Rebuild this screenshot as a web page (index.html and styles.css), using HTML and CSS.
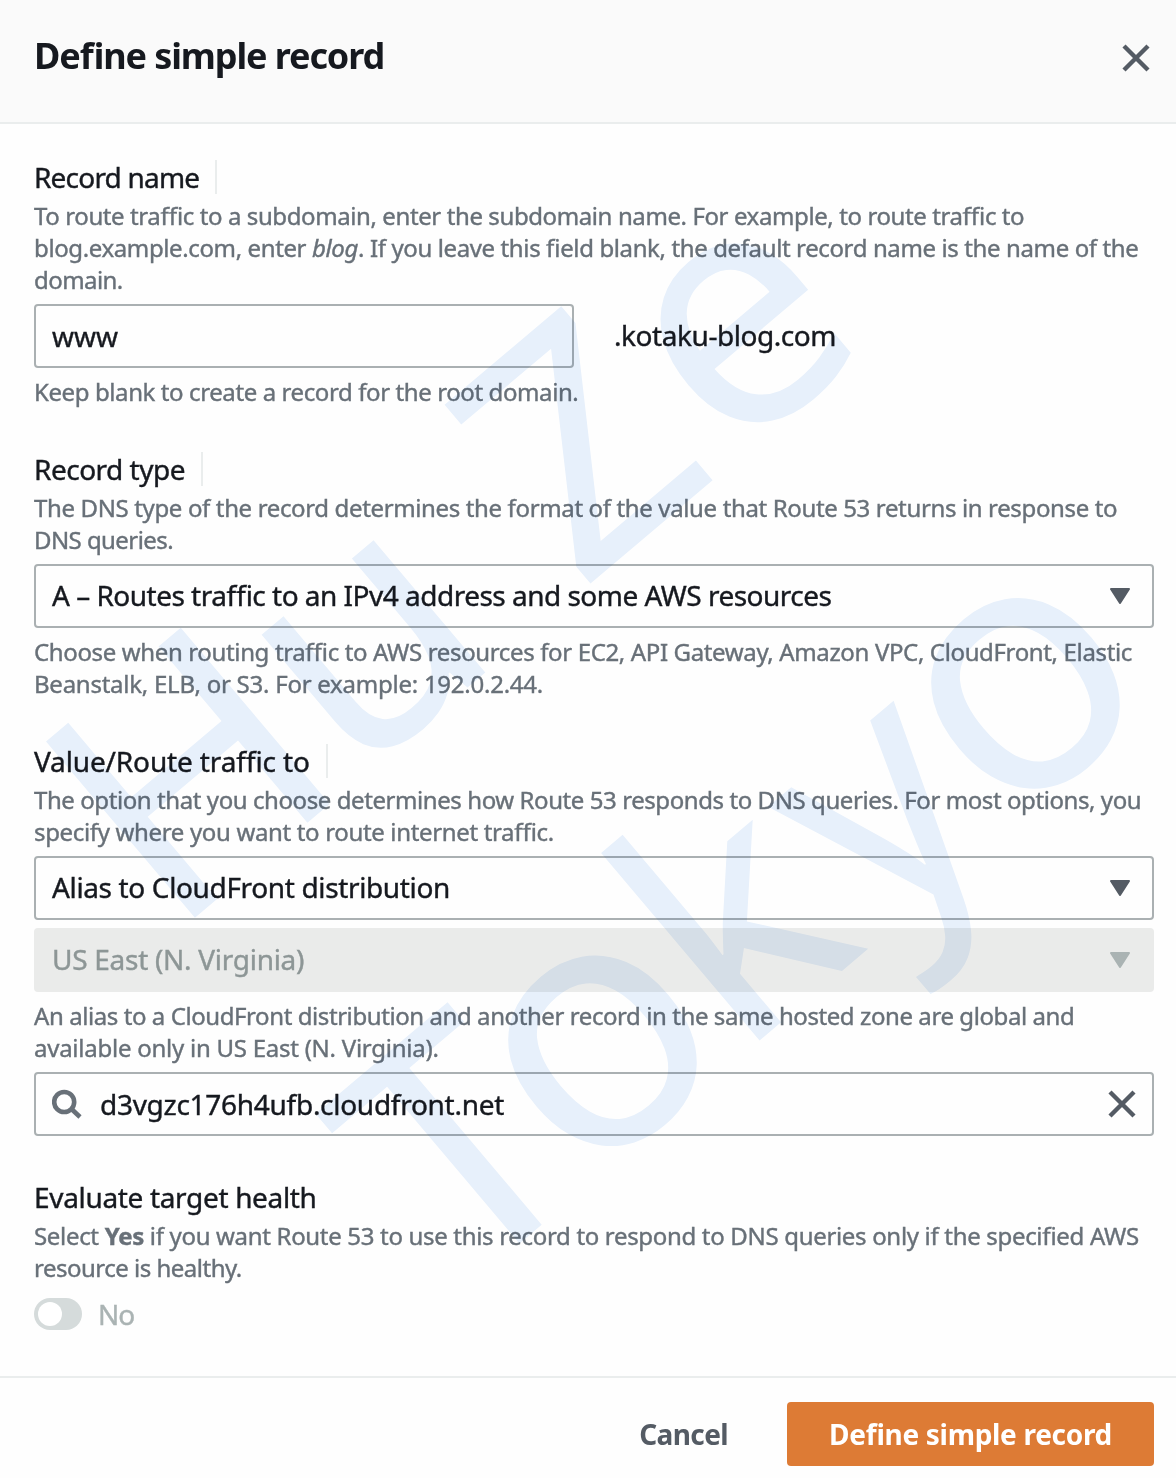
FILE: index.html
```html
<!DOCTYPE html>
<html lang="en">
<head>
<meta charset="utf-8">
<title>Define simple record</title>
<link rel="stylesheet" href="styles.css">
</head>
<body>
<div class="panel">
  <header class="panel-header">
    <h1 class="title">Define simple record</h1>
    <svg class="close" viewBox="0 0 28 28" width="28" height="28"><path d="M2 2 26 26M26 2 2 26"/></svg>
  </header>
  <main class="content">
    <section class="field">
      <h2 class="label label-info"><span class="l1">Record name</span></h2>
      <p class="help"><span class="line h1a">To route traffic to a subdomain, enter the subdomain name. For example, to route traffic to</span><span class="line h1b">blog.example.com, enter <em>blog</em>. If you leave this field blank, the default record name is the name of the</span><span class="line h1c">domain.</span></p>
      <div class="name-row">
        <div class="box name-input"><span class="v1">www</span></div>
        <span class="suffix">.kotaku-blog.com</span>
      </div>
      <p class="help after"><span class="line h2a">Keep blank to create a record for the root domain.</span></p>
    </section>
    <section class="field">
      <h2 class="label label-info"><span class="l2">Record type</span></h2>
      <p class="help"><span class="line h3a">The DNS type of the record determines the format of the value that Route 53 returns in response to</span><span class="line h3b">DNS queries.</span></p>
      <div class="box"><span class="v2">A – Routes traffic to an IPv4 address and some AWS resources</span><svg class="caret" viewBox="0 0 20 16" width="20" height="16"><path d="M1 1H19L10 15Z"/></svg></div>
      <p class="help after"><span class="line h4a">Choose when routing traffic to AWS resources for EC2, API Gateway, Amazon VPC, CloudFront, Elastic</span><span class="line h4b">Beanstalk, ELB, or S3. For example: 192.0.2.44.</span></p>
    </section>
    <section class="field">
      <h2 class="label label-info"><span class="l3">Value/Route traffic to</span></h2>
      <p class="help"><span class="line h5a">The option that you choose determines how Route 53 responds to DNS queries. For most options, you</span><span class="line h5b">specify where you want to route internet traffic.</span></p>
      <div class="box"><span class="v3">Alias to CloudFront distribution</span><svg class="caret" viewBox="0 0 20 16" width="20" height="16"><path d="M1 1H19L10 15Z"/></svg></div>
      <div class="box disabled"><span class="v4">US East (N. Virginia)</span><svg class="caret" viewBox="0 0 20 16" width="20" height="16"><path d="M1 1H19L10 15Z"/></svg></div>
      <p class="help after"><span class="line h6a">An alias to a CloudFront distribution and another record in the same hosted zone are global and</span><span class="line h6b">available only in US East (N. Virginia).</span></p>
      <div class="box search">
        <svg class="glass" viewBox="0 0 32 32" width="32" height="32"><circle cx="12.2" cy="14" r="10"/><path d="M19.5 21 28 29"/></svg>
        <span class="v5">d3vgzc176h4ufb.cloudfront.net</span>
        <svg class="close clear" viewBox="0 0 28 28" width="28" height="28"><path d="M2 2 26 26M26 2 2 26"/></svg>
      </div>
    </section>
    <section class="field">
      <h2 class="label"><span class="l4">Evaluate target health</span></h2>
      <p class="help"><span class="line h7a">Select <b>Yes</b> if you want Route 53 to use this record to respond to DNS queries only if the specified AWS</span><span class="line h7b">resource is healthy.</span></p>
      <div class="toggle-row"><span class="toggle"></span><span class="toggle-text">No</span></div>
    </section>
  </main>
  <footer class="footer">
    <span class="cancel">Cancel</span>
    <span class="primary"><span class="pt">Define simple record</span></span>
  </footer>
  <svg class="watermark" viewBox="0 0 1176 1478" width="1176" height="1478">
    <text transform="translate(171 938) rotate(-40.2)">Hu <tspan dx="14">Z</tspan><tspan class="round-e" dx="12">e</tspan></text>
    <text transform="translate(462 1292) rotate(-40.2)">T<tspan class="round" dx="-22">o</tspan><tspan dx="-6">k</tspan><tspan dx="12">y</tspan><tspan class="round">o</tspan></text>
  </svg>
</div>
</body>
</html>
```
FILE: styles.css
```css
* { box-sizing: border-box; }
body { margin: 0; font-family: "Noto Sans", sans-serif; font-feature-settings: "liga" 1; color: #16191f; background: #fefefe; -webkit-text-stroke: 0.4px currentColor; }
.panel { position: relative; width: 1176px; height: 1478px; overflow: hidden; display: flex; flex-direction: column; }
.panel-header { height: 124px; padding: 33px 26px 0 34px; background: #fafafa; border-bottom: 2px solid #eaeded; display: flex; justify-content: space-between; align-items: flex-start; }
.title { margin: 0; font-size: 36px; line-height: 46px; font-weight: 700; letter-spacing: -1.1px; white-space: nowrap; -webkit-text-stroke: 0; }
.close { margin-top: 11px; flex: none; fill: none; stroke: #545b64; stroke-width: 4.4; }
.content { height: 1252px; padding: 34px 22px 0 34px; }
.field { margin-bottom: 42px; }
.label { margin: 0 0 6px; padding-top: 2px; height: 36px; display: flex; align-items: center; font-size: 28px; line-height: 36px; font-weight: 400; white-space: nowrap; }
.label-info::after { content: ""; width: 2px; height: 34px; margin-left: 16px; background: #eaeded; }
.help { margin: 0 0 8px; font-size: 24px; line-height: 32px; color: #687078; }
.help.after { margin: 8px 0 0; }
.line { display: block; white-space: nowrap; }
.box { height: 64px; border: 2px solid #aab0b2; border-radius: 4px; padding: 0 22px 0 16px; display: flex; align-items: center; justify-content: space-between; font-size: 28px; line-height: 36px; white-space: nowrap; }
.name-row { display: flex; align-items: center; gap: 40px; font-size: 28px; }
.name-input { width: 540px; }
.caret { fill: #545b64; stroke: #545b64; stroke-width: 2; stroke-linejoin: round; }
.disabled { margin-top: 8px; background: #eaebea; border-color: #eaebea; color: #8d9696; }
.disabled .caret { fill: #aab3b3; stroke: #aab3b3; }
.search { margin-top: 8px; justify-content: flex-start; padding-right: 16px; }
.glass { fill: none; stroke: #687078; stroke-width: 4.6; margin-right: 16px; }
.clear { margin: 0 0 0 auto; }
.toggle-row { margin-top: 14px; display: flex; align-items: center; gap: 16px; font-size: 28px; line-height: 32px; color: #aab3b3; }
.toggle { width: 48px; height: 32px; padding: 4px; border-radius: 16px; background: #d5dbdb; }
.toggle::after { content: ""; display: block; width: 24px; height: 24px; border-radius: 50%; background: #fff; }
.footer { height: 102px; border-top: 2px solid #eaeded; padding: 24px 22px 0 0; display: flex; justify-content: flex-end; align-items: flex-start; font-size: 28px; line-height: 64px; font-weight: 700; -webkit-text-stroke: 0; }
.cancel { color: #545b64; margin-right: 59px; letter-spacing: -0.6px; }
.primary { width: 367px; height: 64px; border-radius: 4px; background: #dd7b35; color: #fff; text-align: center; white-space: nowrap; letter-spacing: -0.3px; }

/* tracking, tuned line by line */
.h1a, .h2a { letter-spacing: -0.4px; }
.h1b { letter-spacing: -0.38px; }
.h1c, .h3b { letter-spacing: -0.57px; }
.h3a, .h4a { letter-spacing: -0.36px; }
.h5b { letter-spacing: -0.34px; }
.h4b, .h6b { letter-spacing: -0.25px; }
.h5a, .h6a { letter-spacing: -0.42px; }
.h7a { letter-spacing: -0.32px; }
.h7b { letter-spacing: -0.5px; }
.l1 { letter-spacing: -0.8px; }
.l2 { letter-spacing: -0.5px; }
.l3 { letter-spacing: -0.14px; }
.l4 { letter-spacing: -0.33px; }
.suffix { letter-spacing: -0.44px; padding-bottom: 2px; }
.v2 { letter-spacing: -0.51px; }
.v3 { letter-spacing: -0.36px; }
.v4, .v5 { letter-spacing: -0.28px; }
.v2, .v3, .v4 { padding-bottom: 2px; }
.toggle-text { letter-spacing: -1px; }

.watermark { position: absolute; left: 0; top: 0; pointer-events: none; mix-blend-mode: multiply; -webkit-text-stroke: 0; }
.watermark text { font-family: "Noto Sans", sans-serif; font-size: 323px; fill: #e8f1fc; }
.watermark .round { font-size: 348px; }
.watermark .round-e { font-size: 334px; }
```
